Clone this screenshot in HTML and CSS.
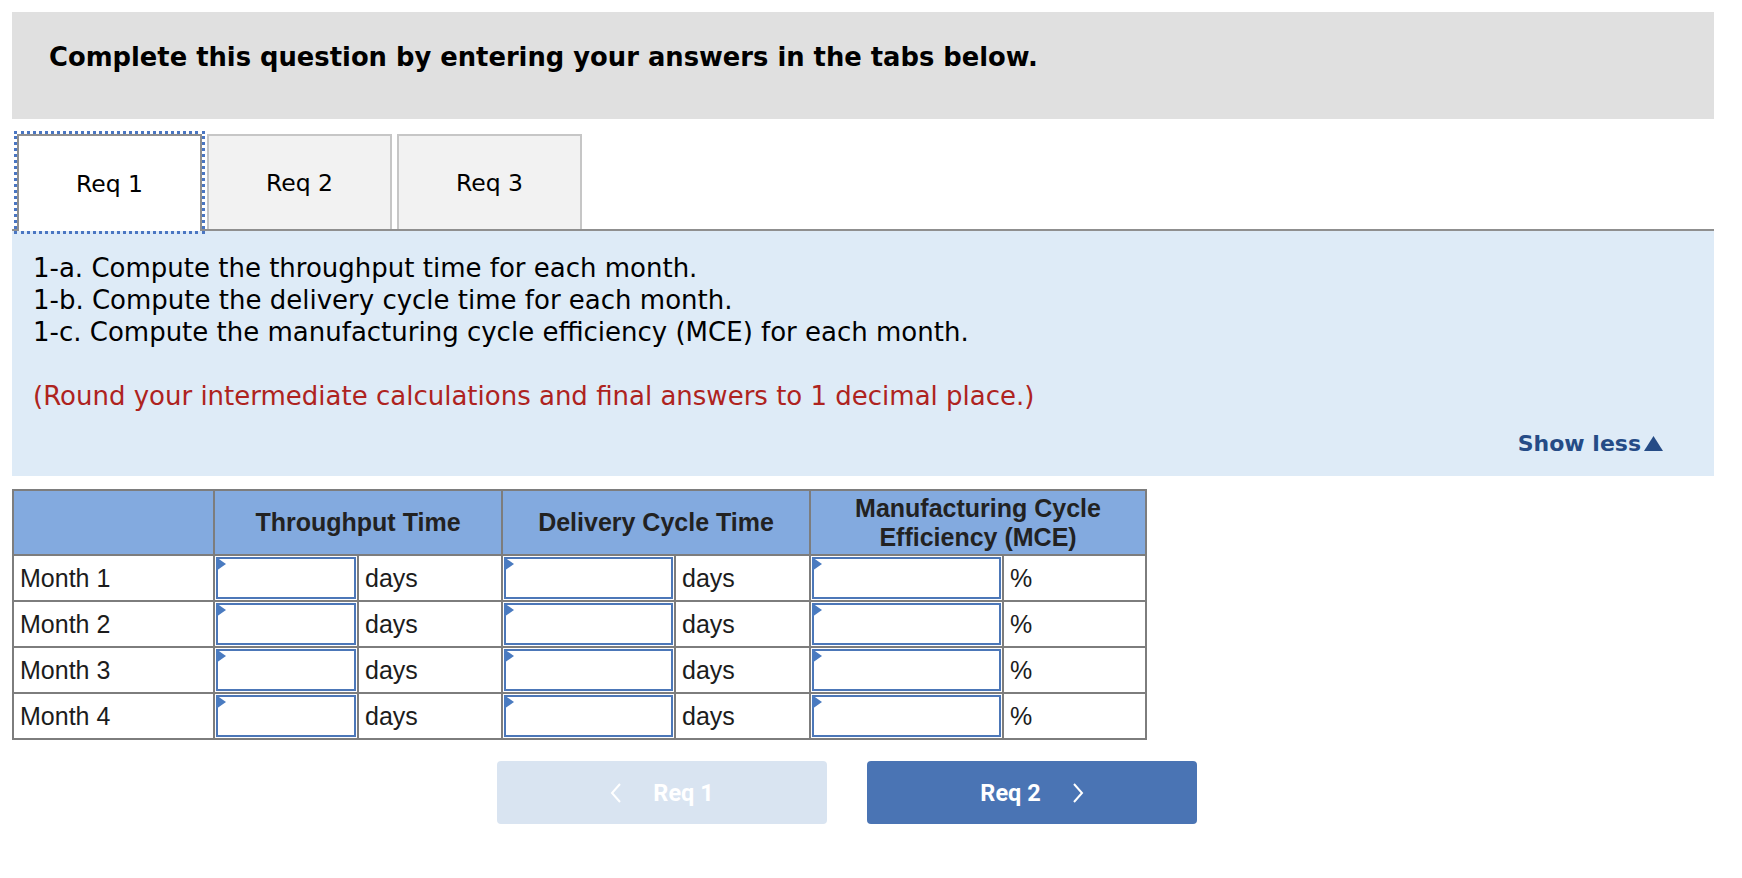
FILE: index.html
```html
<!DOCTYPE html>
<html>
<head>
<meta charset="utf-8">
<link rel="stylesheet" href="styles.css">
</head>
<body>
<div class="page">
  <div class="banner">Complete this question by entering your answers in the tabs below.</div>

  <div class="tabs">
    <div class="tab active">Req 1</div>
    <div class="tab">Req 2</div>
    <div class="tab">Req 3</div>
  </div>

  <div class="panel">
    <p class="lines">1-a. Compute the throughput time for each month.<br>1-b. Compute the delivery cycle time for each month.<br>1-c. Compute the manufacturing cycle efficiency (MCE) for each month.</p>
    <p class="note">(Round your intermediate calculations and final answers to 1 decimal place.)</p>
    <div class="show-less">Show less<svg class="tri" width="19" height="15" viewBox="0 0 19 15"><path d="M9.5 0 L19 15 L0 15 Z" fill="#254b86"/></svg></div>
  </div>

  <table class="grid">
    <colgroup>
      <col class="c-label"><col class="c-in1"><col class="c-u1"><col class="c-in2"><col class="c-u2"><col class="c-in3"><col class="c-u3">
    </colgroup>
    <thead>
      <tr>
        <th></th>
        <th colspan="2">Throughput Time</th>
        <th colspan="2">Delivery Cycle Time</th>
        <th colspan="2" class="two">Manufacturing Cycle<br>Efficiency (MCE)</th>
      </tr>
    </thead>
    <tbody>
      <tr>
        <td class="label">Month 1</td>
        <td class="in"><div class="field"><input type="text"></div></td><td class="unit">days</td>
        <td class="in"><div class="field"><input type="text"></div></td><td class="unit">days</td>
        <td class="in"><div class="field"><input type="text"></div></td><td class="unit">%</td>
      </tr>
      <tr>
        <td class="label">Month 2</td>
        <td class="in"><div class="field"><input type="text"></div></td><td class="unit">days</td>
        <td class="in"><div class="field"><input type="text"></div></td><td class="unit">days</td>
        <td class="in"><div class="field"><input type="text"></div></td><td class="unit">%</td>
      </tr>
      <tr>
        <td class="label">Month 3</td>
        <td class="in"><div class="field"><input type="text"></div></td><td class="unit">days</td>
        <td class="in"><div class="field"><input type="text"></div></td><td class="unit">days</td>
        <td class="in"><div class="field"><input type="text"></div></td><td class="unit">%</td>
      </tr>
      <tr>
        <td class="label">Month 4</td>
        <td class="in"><div class="field"><input type="text"></div></td><td class="unit">days</td>
        <td class="in"><div class="field"><input type="text"></div></td><td class="unit">days</td>
        <td class="in"><div class="field"><input type="text"></div></td><td class="unit">%</td>
      </tr>
    </tbody>
  </table>

  <div class="nav">
    <div class="btn disabled">
      <svg class="chev" width="12" height="22" viewBox="0 0 12 22"><path d="M10 2 L2 11 L10 20" fill="none" stroke="#ffffff" stroke-width="2"/></svg>
      <span>Req 1</span>
    </div>
    <div class="btn primary">
      <span>Req 2</span>
      <svg class="chev" width="12" height="22" viewBox="0 0 12 22"><path d="M2 2 L10 11 L2 20" fill="none" stroke="#ffffff" stroke-width="2"/></svg>
    </div>
  </div>
</div>
</body>
</html>
```

FILE: styles.css
```css
html, body {
  margin: 0;
  padding: 0;
  background: #ffffff;
}

.page {
  width: 1702px;
  padding: 12px 0 0 12px;
}

.banner {
  height: 107px;
  box-sizing: border-box;
  background: #e0e0e0;
  padding: 29px 0 0 37px;
  font-family: "DejaVu Sans", Verdana, sans-serif;
  font-weight: bold;
  font-size: 25.8px;
  line-height: 32px;
  color: #000;
}

.tabs {
  display: flex;
  gap: 5px;
  margin-top: 15px;
  padding-left: 5px;
  border-bottom: 2px solid #8f8f8f;
  height: 95px;
}

.tab {
  width: 185px;
  height: 95px;
  box-sizing: border-box;
  border: 2px solid #c6c6c6;
  border-bottom: none;
  background: #f2f2f2;
  display: flex;
  align-items: center;
  justify-content: center;
  font-family: "DejaVu Sans", Verdana, sans-serif;
  font-size: 23.5px;
  color: #000;
}

.tab.active {
  background: #ffffff;
  border-color: #8f8f8f;
  height: 97px;
  position: relative;
  outline: 3px dotted #4a76c2;
  outline-offset: 0px;
}

.panel {
  background: #deebf7;
  padding: 21px 51px 19px 21px;
  font-family: "DejaVu Sans", Verdana, sans-serif;
  font-size: 26px;
  line-height: 32px;
  color: #000;
}

.panel p {
  margin: 0;
}

.note {
  margin-top: 32px !important;
  color: #ae2320;
}

.show-less {
  margin-top: 19px;
  text-align: right;
  font-weight: bold;
  font-size: 22px;
  line-height: 26px;
  color: #254b86;
}

.tri {
  margin-left: 3px;
  vertical-align: baseline;
}

.grid {
  margin-top: 13px;
  width: 1133px;
  table-layout: fixed;
  border-collapse: collapse;
  border: 2px solid #7d7d7d;
  font-family: "Liberation Sans", Arial, sans-serif;
  font-size: 25px;
  color: #1c1c1c;
}

.c-label { width: 201px; }
.c-in1 { width: 144px; }
.c-u1 { width: 144px; }
.c-in2 { width: 173px; }
.c-u2 { width: 135px; }
.c-in3 { width: 193px; }
.c-u3 { width: 143px; }

.grid th {
  background: #83aadf;
  border: 2px solid #7d7d7d;
  height: 63px;
  padding: 0;
  font-weight: bold;
  line-height: 29px;
  color: #222;
  text-align: center;
}

.grid td {
  border: 2px solid #7d7d7d;
  height: 42px;
  padding: 0;
  background: #fff;
}

.grid td.label,
.grid td.unit {
  padding-left: 6px;
  line-height: 42px;
}

.grid td.in {
  padding: 1px;
  height: 42px;
}

.field {
  position: relative;
  height: 42px;
}

.field::before {
  content: "";
  position: absolute;
  left: 0;
  top: 0;
  width: 0;
  height: 0;
  border-left: 10px solid #4a7bc0;
  border-top: 7px solid transparent;
  border-bottom: 7px solid transparent;
}

.field input {
  display: block;
  width: 100%;
  height: 42px;
  box-sizing: border-box;
  margin: 0;
  border: 2px solid #4c77b8;
  background: #fff;
  outline: none;
}

.nav {
  display: flex;
  gap: 40px;
  margin-top: 21px;
  padding-left: 485px;
}

.btn {
  width: 330px;
  height: 63px;
  border-radius: 4px;
  display: flex;
  align-items: center;
  justify-content: center;
  gap: 31px;
  font-family: Roboto, "Liberation Sans", sans-serif;
  font-weight: bold;
  font-size: 23.5px;
  color: #fff;
}

.btn.disabled {
  background: #d9e4f1;
}

.btn.primary {
  background: #4a74b4;
}

.chev {
  display: block;
}
```
